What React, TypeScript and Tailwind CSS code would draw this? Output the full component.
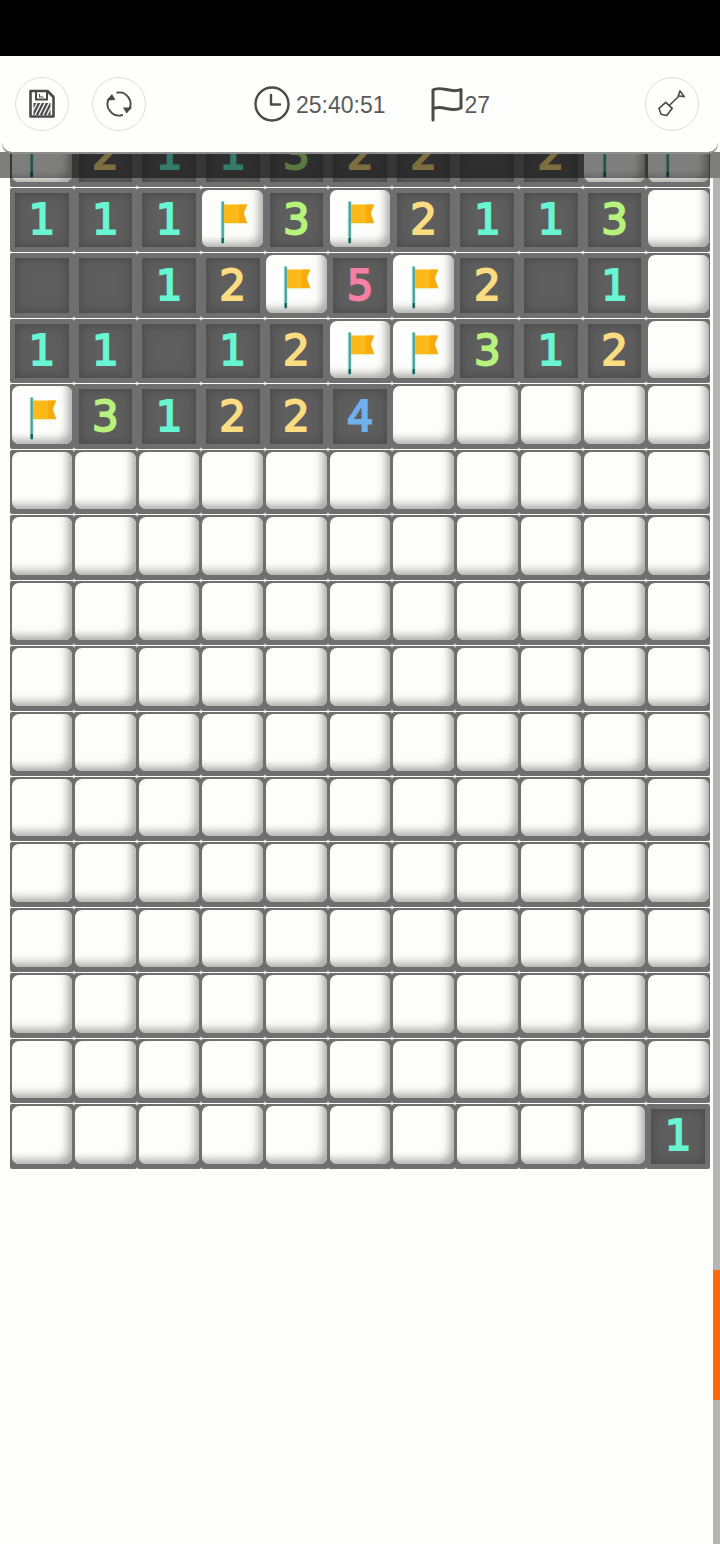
import type { ReactNode } from "react";

const rows: string[] = [
  "F21132202FF",
  "111F3F2113U",
  "0012F5F201U",
  "11012FF312U",
  "F31224UUUUU",
  ...Array.from({ length: 10 }, () => "UUUUUUUUUUU"),
  "UUUUUUUUUU1",
];

const numberColors: Record<string, string> = {
  "1": "text-[#68f5d2]",
  "2": "text-[#fbdc80]",
  "3": "text-[#b6f27c]",
  "4": "text-[#6fb1ec]",
  "5": "text-[#f680a4]",
};

function FlagGlyph({ poleOnly }: { poleOnly: boolean }) {
  return (
    <svg width="34" height="50" viewBox="2 0 34 50" className="block">
      <rect x="6.5" y="7.5" width="4.5" height="42" fill="#a8ecc0" opacity="0.5" />
      <rect x="7.6" y="7.5" width="2.2" height="42" fill="#3f9ea4" />
      <rect x="7.6" y="44" width="2.2" height="5" fill="#1d5a5a" />
      {!poleOnly && (
        <>
          <path d="M10 10.5 H33.5 L30 19 L33.5 29.5 H10 Z" fill="#d9e89a" opacity="0.6" transform="translate(0.6 0.8)" />
          <path d="M10 10.5 H33 L29.5 19 L33 29 H10 Z" fill="#fdb918" />
          <path d="M25 10.5 H33 L29.5 19 L33 29 H25 Z" fill="#f8ab10" />
        </>
      )}
    </svg>
  );
}

function Cell({ value, poleOnly }: { value: string; poleOnly: boolean }) {
  if (value === "U" || value === "F") {
    return (
      <div className="h-full rounded-[2px] bg-[#6f6f6f] pt-[2px] pr-[1.5px] pb-[5px] pl-[1.5px]">
        <div className="flex h-full items-center justify-center rounded-[7px] bg-[#fdfdfb] shadow-[inset_-7px_-7px_8px_-3px_#a9a9a5]">
          {value === "F" && <FlagGlyph poleOnly={poleOnly} />}
        </div>
      </div>
    );
  }
  return (
    <div className="h-full rounded-[2px] bg-[#6f6f6f] p-[5px]">
      <div className="flex h-full items-center justify-center bg-[#5e5e5e] shadow-[inset_0_0_12px_#464646]">
        {value !== "0" && (
          <span
            className={`font-['DejaVu_Sans',sans-serif] text-[42px] leading-none [-webkit-text-stroke:1.9px_currentColor] ${numberColors[value]}`}
          >
            {value}
          </span>
        )}
      </div>
    </div>
  );
}

function RoundButton({ children }: { children: ReactNode }) {
  return (
    <div className="flex h-[54px] w-[54px] items-center justify-center rounded-full border border-[#dddddb] bg-[#fefefd]">
      {children}
    </div>
  );
}

function SaveIcon() {
  return (
    <svg width="28" height="30" viewBox="0 0 28 30" fill="none">
      <path d="M2.5 2 H19.5 L25.5 8 V27.5 H2.5 Z" stroke="#4a4a4a" strokeWidth="2.6" strokeLinejoin="round" fill="#fefefd" />
      <path d="M8 2 V10.5 H19 V2" stroke="#4a4a4a" strokeWidth="2" />
      <path d="M11.5 5 V8 H15.5" stroke="#4a4a4a" strokeWidth="1.2" />
      <rect x="5.5" y="14" width="17" height="12" fill="#4a4a4a" />
      <path d="M7 26 L13 14 M11 26 L17 14 M15 26 L21 14 M19 26 L23 18 M5 22 L9 14" stroke="#f2f2f2" strokeWidth="1.5" />
    </svg>
  );
}

function RefreshIcon() {
  return (
    <svg width="30" height="30" viewBox="-15 -15 30 30" fill="none">
      <path d="M-2.5 -11.3 A11.5 11.5 0 0 1 10 5.6" stroke="#4a4a4a" strokeWidth="1.9" />
      <path d="M4 10.8 A11.5 11.5 0 0 1 -10 -5.6" stroke="#4a4a4a" strokeWidth="1.9" />
      <path d="M-7 -10 L-3.5 -4 L-12.5 -3.5 Z" fill="#4a4a4a" />
      <path d="M7.5 9.5 L4 3.5 L13 3.5 Z" fill="#4a4a4a" />
    </svg>
  );
}

function ShovelIcon() {
  return (
    <svg width="28" height="28" viewBox="0 0 28 28" fill="none" stroke="#4a4a4a" strokeWidth="1.6" strokeLinejoin="round">
      <path d="M7.7 12.3 L14.3 18.3 L8.7 25.5 L3 24.3 L1 18.3 Z" />
      <path d="M11.5 15.3 L21.3 5.7" />
      <path d="M20.3 5.7 L22 0.9 L26.3 6.7 Z" />
    </svg>
  );
}

function ClockIcon() {
  return (
    <svg width="36" height="36" viewBox="0 0 36 36" fill="none" stroke="#4a4a4a" strokeWidth="2.4" strokeLinecap="round" strokeLinejoin="round">
      <circle cx="18" cy="18" r="16.5" />
      <path d="M17 9 V18.5 H26" />
    </svg>
  );
}

function FlagOutline() {
  return (
    <svg width="32" height="36" viewBox="0 0 32 36" fill="none" stroke="#4a4a4a" strokeWidth="3" strokeLinecap="round" strokeLinejoin="round">
      <path d="M2 34 V4 C10 -1 20 8 30 3.5 V22 C20 27 10 18 2 23" />
    </svg>
  );
}

export default function App() {
  return (
    <div className="relative h-[1544px] w-[720px] overflow-hidden bg-[#fdfdfb] font-['Liberation_Sans',sans-serif]">
      <div className="h-14 w-full bg-black" />

      <main className="pt-[66.6px] pl-[10px]">
        <div className="grid w-[700px] grid-cols-11 auto-rows-[65.45px]">
          {rows.map((row, r) =>
            row.split("").map((value, c) => (
              <div key={`${r}-${c}`} className="pb-px">
                <Cell value={value} poleOnly={r === 0} />
              </div>
            )),
          )}
        </div>
      </main>

      <div className="absolute top-[178px] right-0 bottom-0 w-[7px] bg-[#b4b4b4]">
        <div className="absolute top-[1092px] h-[130px] w-full bg-[#fb6a0c]" />
      </div>

      <div className="absolute top-[152px] left-0 h-[26px] w-full bg-black/50" />

      <header className="absolute top-14 right-[2px] left-[2px] flex h-[96px] items-center rounded-b-[10px] bg-[#fefefd] pr-[19px] pl-[13px] shadow-[0_2px_0_#8e8e8e]">
        <div className="flex gap-[23px]">
          <RoundButton><SaveIcon /></RoundButton>
          <RoundButton><RefreshIcon /></RoundButton>
        </div>
        <div className="ml-[108px] flex items-center text-[23px] text-[#5a5a5a]">
          <ClockIcon />
          <span className="mt-[2px] ml-[6px]">25:40:51</span>
          <span className="ml-[45px] flex items-center">
            <FlagOutline />
            <span className="mt-[2px] ml-[2px]">27</span>
          </span>
        </div>
        <div className="ml-auto">
          <RoundButton><ShovelIcon /></RoundButton>
        </div>
      </header>
    </div>
  );
}
